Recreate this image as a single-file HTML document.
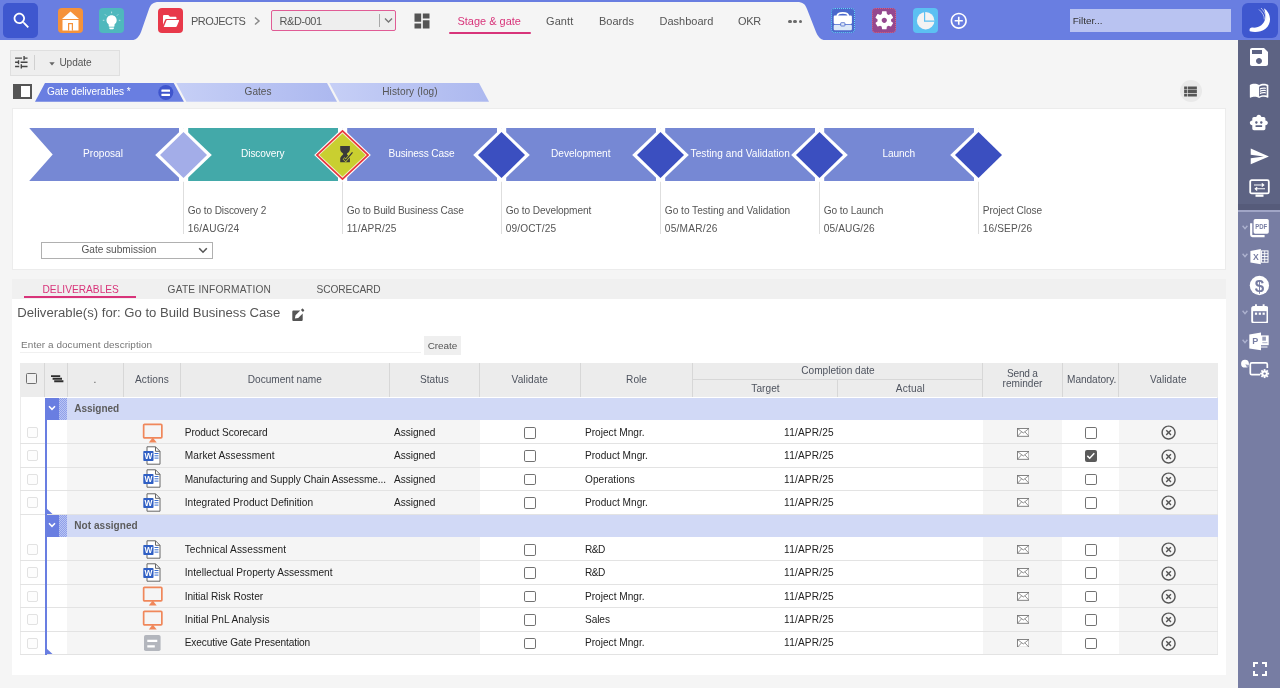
<!DOCTYPE html>
<html lang="en"><head><meta charset="utf-8"><title>Stage &amp; gate - R&amp;D-001</title>
<style>
html,body{margin:0;padding:0}
body{width:1280px;height:688px;overflow:hidden;position:relative;background:#f5f5f5;font-family:"Liberation Sans", sans-serif;}
div,svg,span.t{position:absolute;box-sizing:border-box}
span.t{white-space:nowrap;}
span.t i{display:inline-block;width:0;height:0}
#app{left:0;top:0;width:1280px;height:688px;will-change:transform}
</style></head><body><div id="app">
<div style="left:0px;top:0px;width:1280px;height:40px;background:#697ee1"></div>
<svg style="left:120px;top:0px" width="720" height="41" viewBox="120 0 720 41" ><path d="M124 41 C135 41 138 39 141 32 L149 9 C151 4 153 2 159 2 L797 2 C803 2 805 4 807 9 L816 32 C819 39 822 41 833 41 Z" fill="#f5f5f5"/></svg>
<div style="left:3px;top:3px;width:35px;height:35px;background:#3e57cf;border-radius:5px"></div>
<svg style="left:11px;top:10px" width="21" height="21" viewBox="0 0 24 24" ><path fill="#fff" d="M15.5 14h-.79l-.28-.27C15.41 12.59 16 11.11 16 9.5 16 5.91 13.09 3 9.500 3S3 5.910 3 9.500 5.910 16 9.500 16c1.610 0 3.090-.59 4.230-1.570l.27.28v.79l5 4.990L20.490 19l-4.990-5zm-6 0C7.010 14 5 11.990 5 9.500S7.010 5 9.500 5 14 7.010 14 9.500 11.990 14 9.500 14z"/></svg>
<div style="left:57.5px;top:8px;width:25px;height:25px;background:#f5923a;border-radius:4px"></div>
<svg style="left:57.5px;top:8px" width="25" height="25" viewBox="0 0 25 25" ><path fill="#fff" d="M12.500 3.500 L21 11 H4 Z"/><path fill="#fff" d="M4.500 12 H20.500 V22.500 H4.500 Z"/><path fill="#f5923a" d="M10 15 H15 V22.500 H10 Z"/><path fill="#fff" d="M11.200 16.200 H13.800 V22.500 H11.200 Z"/></svg>
<div style="left:99px;top:8px;width:25px;height:25px;background:#4fb8bd;border-radius:4px"></div>
<svg style="left:99px;top:8px" width="25" height="25" viewBox="0 0 25 25" ><path fill="#fff" d="M12.600 7.300 C9.600 7.300 7.500 9.600 7.500 12.300 C7.500 14.100 8.400 15.500 9.700 16.400 V18 C9.700 18.400 10 18.700 10.400 18.700 H14.800 C15.200 18.700 15.500 18.400 15.500 18 V16.400 C16.800 15.500 17.700 14.100 17.700 12.300 C17.700 9.600 15.600 7.300 12.600 7.300 Z M10.300 19.600 H14.900 V20.300 C14.900 20.800 14.500 21.200 14 21.200 H11.200 C10.700 21.200 10.300 20.800 10.300 20.300 Z"/><path d="M12.600 3.600 V5.300 M6 6.400 L7.200 7.600 M19.200 6.400 L18 7.600 M3.800 12.300 H5.400 M19.800 12.300 H21.400" stroke="#bfe6e8" stroke-width="0.900" fill="none"/></svg>
<div style="left:157.5px;top:8px;width:25px;height:25px;background:#e8394a;border-radius:4px"></div>
<svg style="left:157.5px;top:8px" width="25" height="25" viewBox="0 0 25 25" ><path fill="#fff" d="M5 8.200 C5 7.500 5.500 7 6.200 7 H10.300 L12 8.800 H17.300 C18 8.800 18.500 9.300 18.500 10 V11 H8.500 C7.800 11 7.300 11.300 7 12 L5 16.800 Z"/><path fill="#fff" d="M8.700 12 H20.300 C20.900 12 21.200 12.500 21 13 L18.800 18.200 C18.600 18.700 18.200 19 17.600 19 H5.700 Z"/></svg>
<svg style="left:253px;top:15.5px" width="8" height="10" viewBox="0 0 8 10" ><path d="M2 1.500 L6 5 L2 8.500" fill="none" stroke="#8a8a8a" stroke-width="1.500"/></svg>
<div style="left:271px;top:10px;width:124.5px;height:20.5px;background:#eee;border:1px solid #e05c95;border-radius:2px"></div>
<div style="left:379px;top:14px;width:1px;height:13px;background:#a8a8a8"></div>
<svg style="left:383.5px;top:17px" width="9" height="7" viewBox="0 0 9 7" ><path d="M1 1.500 L4.500 5 L8 1.500" fill="none" stroke="#777" stroke-width="1.400"/></svg>
<svg style="left:412px;top:10.5px" width="20" height="20" viewBox="0 0 24 24" ><path fill="#555" d="M3 13h8V3H3v10zm0 8h8v-6H3v6zm10 0h8V11h-8v10zm0-18v6h8V3h-8z"/></svg>
<div style="left:449px;top:32px;width:81.5px;height:2px;background:#d8347a;border-radius:1px"></div>
<div style="left:788.05px;top:19.5px;width:3.5px;height:3.5px;background:#6a6a6a;border-radius:50%"></div>
<div style="left:793.3px;top:19.5px;width:3.5px;height:3.5px;background:#6a6a6a;border-radius:50%"></div>
<div style="left:798.55px;top:19.5px;width:3.5px;height:3.5px;background:#6a6a6a;border-radius:50%"></div>
<div style="left:830.5px;top:8px;width:24px;height:24.7px;background:#4a68cc;border:1px dotted #63d4f2;border-radius:4px"></div>
<svg style="left:828px;top:6px" width="30" height="30" viewBox="828 6 30 30" ><path d="M837.300 16 C837.300 11.800 848.300 11.800 848.300 16" fill="none" stroke="#fff" stroke-width="1.700"/><rect x="833.700" y="15.500" width="18.200" height="8.400" rx="1.200" fill="#fff"/><rect x="833.700" y="24.700" width="18.200" height="5.500" rx="1.200" fill="#dce8f7"/><rect x="840.700" y="22.700" width="4.200" height="3.300" rx="0.500" fill="#dce8f7" stroke="#4a68cc" stroke-width="0.800"/></svg>
<div style="left:872.2px;top:8px;width:24px;height:24.7px;background:#95488f;border:1px dotted #d86078;border-radius:4px"></div>
<svg style="left:873px;top:9.3px" width="22.6" height="22.6" viewBox="0 0 24 24" ><path fill="#fff" d="M19.140 12.940c.04-.3.06-.61.06-.94 0-.32-.02-.64-.07-.94l2.030-1.580c.18-.14.23-.41.12-.61l-1.920-3.320c-.12-.22-.37-.29-.59-.22l-2.390.96c-.5-.38-1.030-.7-1.620-.94l-.36-2.540c-.04-.24-.24-.41-.48-.41h-3.840c-.24 0-.43.17-.47.41l-.36 2.540c-.59.24-1.130.57-1.620.94l-2.390-.96c-.22-.08-.47 0-.59.22L2.740 8.870c-.12.21-.08.47.12.61l2.030 1.580c-.05.3-.09.63-.09.94s.02.64.07.94l-2.030 1.580c-.18.14-.23.41-.12.61l1.920 3.320c.12.22.37.29.59.22l2.390-.96c.5.38 1.030.7 1.620.94l.36 2.540c.05.24.24.41.48.41h3.840c.24 0 .44-.17.47-.41l.36-2.540c.59-.24 1.130-.56 1.620-.94l2.390.96c.22.08.47 0 .59-.22l1.920-3.320c.12-.22.07-.47-.12-.61l-2.010-1.580zM12 14.800c-1.540 0-2.800-1.260-2.800-2.800s1.260-2.800 2.800-2.800 2.800 1.260 2.800 2.800-1.260 2.800-2.800 2.800z"/></svg>
<div style="left:913px;top:8px;width:25px;height:24.8px;background:#5cc0f2;border-radius:4px"></div>
<svg style="left:913px;top:8px" width="25" height="25" viewBox="0 0 25 25" ><circle cx="12.650" cy="12.650" r="8.750" fill="#f3f3f3"/><path d="M11.600 3.500 V13.100 H21.800" fill="none" stroke="#5cc0f2" stroke-width="1.200"/></svg>
<svg style="left:949.35px;top:11px" width="19.5" height="19.5" viewBox="0 0 24 24" ><path fill="#fff" d="M13 7h-2v4H7v2h4v4h2v-4h4v-2h-4V7zm-1-5C6.480 2 2 6.480 2 12s4.480 10 10 10 10-4.480 10-10S17.520 2 12 2zm0 18c-4.410 0-8-3.590-8-8s3.590-8 8-8 8 3.590 8 8-3.590 8-8 8z"/></svg>
<div style="left:1070px;top:9px;width:160.7px;height:22.5px;background:#b9c3f1"></div>
<div style="left:1241.5px;top:3px;width:36px;height:35px;background:#3e57cf;border-radius:6px"></div>
<svg style="left:1241.5px;top:3px" width="36" height="35" viewBox="0 0 36 35" ><path fill="#fff" d="M21.800 5.200 C29 9.500 30.500 20 23.500 25.800 C19 29.300 12.500 29.800 7.800 28.300 C7 25.800 8.300 24.300 10.500 24.600 C16.500 25.300 22.300 21.500 23.200 15.500 C23.700 11.800 23.300 8.200 21.800 5.200 Z"/><path d="M19 5 C23 9 24.500 13 24 17 M17 6.500 C20.500 9.500 22.500 13 22.300 16.500" stroke="#dfe4fa" stroke-width="0.700" fill="none"/></svg>
<div style="left:1238px;top:40px;width:42px;height:648px;background:#777da3"></div>
<div style="left:1238px;top:40px;width:42px;height:164px;background:#5d6383"></div>
<div style="left:1238px;top:204px;width:42px;height:7px;background:#565b7a"></div>
<div style="left:1238px;top:210.4px;width:42px;height:1.2px;background:#a0a5c6"></div>
<svg style="left:1247px;top:44.7px" width="24" height="24" viewBox="0 0 24 24" ><path fill="#fff" d="M17 3H5c-1.110 0-2 .9-2 2v14c0 1.100.89 2 2 2h14c1.100 0 2-.9 2-2V7l-4-4zm-5 16c-1.660 0-3-1.340-3-3s1.340-3 3-3 3 1.340 3 3-1.340 3-3 3zm3-10H5V5h10v4z"/></svg>
<svg style="left:1249.2px;top:80px" width="20.2" height="20.2" viewBox="0 0 24 24" ><path fill="#fff" d="M21 5c-1.110-.35-2.330-.5-3.500-.5-1.950 0-4.050.4-5.500 1.500-1.450-1.100-3.550-1.500-5.500-1.500S2.450 4.900 1 6v14.650c0 .25.25.5.5.5.1 0 .15-.05.25-.05C3.100 20.450 5.050 20 6.500 20c1.950 0 4.050.4 5.500 1.500 1.350-.85 3.800-1.500 5.500-1.500 1.650 0 3.350.3 4.750 1.050.1.050.15.050.25.050.25 0 .5-.25.5-.5V6c-.6-.45-1.250-.75-2-1zm0 13.500c-1.100-.35-2.300-.5-3.500-.5-1.700 0-4.150.65-5.500 1.500V8c1.350-.85 3.800-1.500 5.500-1.500 1.200 0 2.400.15 3.500.5v11.500z"/><path fill="#fff" d="M17.500 10.500c.88 0 1.730.09 2.500.26V9.240c-.79-.15-1.640-.24-2.500-.24-1.700 0-3.240.29-4.500.83v1.660c1.130-.64 2.700-.99 4.500-.99zM13 12.490v1.660c1.130-.64 2.700-.99 4.500-.99.88 0 1.730.09 2.500.26V11.900c-.79-.15-1.640-.24-2.500-.24-1.700 0-3.240.3-4.500.83zM17.500 14.330c-1.700 0-3.240.29-4.500.83v1.660c1.130-.64 2.700-.99 4.500-.99.88 0 1.730.09 2.500.26v-1.520c-.79-.16-1.640-.24-2.500-.24z"/></svg>
<svg style="left:1249.3px;top:113.4px" width="19.7" height="19.7" viewBox="0 0 24 24" ><path fill="#fff" d="M20 9V7c0-1.100-.9-2-2-2h-3c0-1.660-1.340-3-3-3S9 3.340 9 5H6c-1.100 0-2 .9-2 2v2c-1.660 0-3 1.340-3 3s1.340 3 3 3v4c0 1.100.9 2 2 2h12c1.100 0 2-.9 2-2v-4c1.660 0 3-1.340 3-3s-1.340-3-3-3zM7.500 11.500c0-.83.67-1.500 1.500-1.500s1.500.67 1.500 1.500S9.830 13 9 13s-1.500-.67-1.500-1.500zM16 17H8v-2h8v2zm-1-4c-.83 0-1.500-.67-1.500-1.500S14.170 10 15 10s1.500.67 1.500 1.500S15.830 13 15 13z"/></svg>
<svg style="left:1248.6px;top:146.3px" width="20.8" height="20.8" viewBox="0 0 24 24" ><path fill="#fff" d="M2.010 21L23 12 2.010 3 2 10l15 2-15 2z"/></svg>
<svg style="left:1248.8px;top:179px" width="21" height="19" viewBox="0 0 21 19" ><rect x="1.200" y="1.200" width="18.600" height="13.200" rx="1.500" fill="none" stroke="#fff" stroke-width="1.800"/><path fill="#fff" d="M6.500 15.500 H14.500 V17.800 H6.500 Z"/><path d="M5 6 H14.500 M12.800 4.300 L14.800 6 L12.800 7.700 M16 9.800 H6.500 M8.200 8.100 L6.200 9.800 L8.200 11.500" fill="none" stroke="#fff" stroke-width="1.100"/></svg>
<svg style="left:1242px;top:224.5px" width="6" height="5" viewBox="0 0 6 5" ><path d="M0.600 0.800 L3 3.600 L5.400 0.800" fill="none" stroke="#adb2cf" stroke-width="1.400"/></svg>
<svg style="left:1248px;top:217px" width="24" height="22" viewBox="1248 217 24 22" ><path d="M1251.200 223.300 V234.800 C1251.200 235.600 1251.700 236.100 1252.500 236.100 H1264.600" fill="none" stroke="#fff" stroke-width="2.200"/><rect x="1253.600" y="219" width="15.200" height="14.700" rx="1.700" fill="#fff"/><text x="1261.250" y="229.400" text-anchor="middle" font-family="Liberation Sans, sans-serif" font-size="7.200" font-weight="700" textLength="12" lengthAdjust="spacingAndGlyphs" fill="#777da3">PDF</text></svg>
<svg style="left:1242px;top:253px" width="6" height="5" viewBox="0 0 6 5" ><path d="M0.600 0.800 L3 3.600 L5.400 0.800" fill="none" stroke="#adb2cf" stroke-width="1.400"/></svg>
<svg style="left:1249px;top:248px" width="21" height="18" viewBox="1249 248 21 18" ><path fill="#fff" d="M1250.400 251 L1260.800 249.100 V264.200 L1250.400 262.500 Z"/><text x="1255.750" y="260.100" text-anchor="middle" font-family="Liberation Sans, sans-serif" font-size="8.600" font-weight="700" fill="#777da3">X</text><rect x="1261.400" y="250.900" width="6.600" height="11.300" fill="none" stroke="#fff" stroke-width="1"/><path d="M1261.400 253.700 H1268 M1261.400 256.500 H1268 M1261.400 259.300 H1268 M1264.700 250.900 V262.200" stroke="#fff" stroke-width="0.900" fill="none"/></svg>
<svg style="left:1248px;top:274px" width="23" height="23" viewBox="1248 274 23 23" ><circle cx="1259.400" cy="285.500" r="9.650" fill="#fff"/><text x="1259.450" y="291.500" text-anchor="middle" font-family="Liberation Sans, sans-serif" font-size="17" font-weight="700" fill="#777da3">$</text></svg>
<svg style="left:1242px;top:310px" width="6" height="5" viewBox="0 0 6 5" ><path d="M0.600 0.800 L3 3.600 L5.400 0.800" fill="none" stroke="#adb2cf" stroke-width="1.400"/></svg>
<svg style="left:1250.5px;top:303.6px" width="17.6" height="19.6" viewBox="0 0 18 20.500" ><rect x="1" y="3" width="16" height="16.500" rx="1.800" fill="none" stroke="#fff" stroke-width="2"/><rect x="1" y="3" width="16" height="4.500" fill="#fff"/><rect x="4" y="0.300" width="2" height="4" fill="#fff"/><rect x="12" y="0.300" width="2" height="4" fill="#fff"/><rect x="3.900" y="9" width="2.300" height="2.300" fill="#fff"/><rect x="7.900" y="9" width="2.300" height="2.300" fill="#fff"/><rect x="11.900" y="9" width="2.300" height="2.300" fill="#fff"/></svg>
<svg style="left:1242px;top:338.5px" width="6" height="5" viewBox="0 0 6 5" ><path d="M0.600 0.800 L3 3.600 L5.400 0.800" fill="none" stroke="#adb2cf" stroke-width="1.400"/></svg>
<svg style="left:1248px;top:331px" width="23" height="21" viewBox="1248 331 23 21" ><path fill="#fff" d="M1249.300 334.400 L1261 332.400 V350.300 L1249.300 348.400 Z"/><text x="1255.200" y="344.100" text-anchor="middle" font-family="Liberation Sans, sans-serif" font-size="9" font-weight="700" fill="#777da3">P</text><rect x="1261" y="335.400" width="7.700" height="9.800" fill="#fff"/><rect x="1262.300" y="336.700" width="3.600" height="4" fill="#777da3" opacity="0.750"/><path d="M1262.300 342.700 H1267.400" stroke="#777da3" stroke-width="0.800" opacity="0.750"/><path d="M1261 347 H1267.500" stroke="#fff" stroke-width="1"/></svg>
<svg style="left:1240px;top:357px" width="31" height="24" viewBox="1240 357 31 24" ><circle cx="1245" cy="363.700" r="3.900" fill="#fff"/><path d="M1245.300 364.200 L1249.500 365.200 L1247.500 368.200 Z" fill="#9a9fbe"/><path d="M1260 374.700 H1251.800 C1250.900 374.700 1250.300 374.100 1250.300 373.200 V364.300 C1250.300 363.400 1250.900 362.800 1251.800 362.800 H1265.800 C1266.700 362.800 1267.300 363.400 1267.300 364.300 V368" fill="none" stroke="#fff" stroke-width="1.700"/><rect x="1263.700" y="369.100" width="1.800" height="9" fill="#fff" transform="rotate(0 1264.600 373.600)"/><rect x="1263.700" y="369.100" width="1.800" height="9" fill="#fff" transform="rotate(45 1264.600 373.600)"/><rect x="1263.700" y="369.100" width="1.800" height="9" fill="#fff" transform="rotate(90 1264.600 373.600)"/><rect x="1263.700" y="369.100" width="1.800" height="9" fill="#fff" transform="rotate(135 1264.600 373.600)"/><circle cx="1264.600" cy="373.600" r="3.100" fill="#fff"/><circle cx="1264.600" cy="373.600" r="1.200" fill="#777da3"/></svg>
<svg style="left:1248px;top:656.5px" width="24" height="24" viewBox="0 0 24 24" ><path fill="#fff" d="M7 14H5v5h5v-2H7v-3zm-2-4h2V7h3V5H5v5zm12 7h-3v2h5v-5h-2v3zM14 5v2h3v3h2V5h-5z"/></svg>
<div style="left:10px;top:50px;width:109.5px;height:25.5px;background:#eeeeee;border:1px solid #dfdfdf"></div>
<svg style="left:12.7px;top:54px" width="16.6" height="16.6" viewBox="0 0 24 24" ><path fill="#444" d="M3 17v2h6v-2H3zM3 5v2h10V5H3zm10 16v-2h8v-2h-8v-2h-2v6h2zM7 9v2H3v2h4v2h2V9H7zm14 4v-2H11v2h10zm-6-4h2V7h4V5h-4V3h-2v6z"/></svg>
<div style="left:34px;top:55px;width:1px;height:15px;background:#d0d0d0"></div>
<svg style="left:49px;top:62px" width="6" height="4" viewBox="0 0 6 4" ><path d="M0.300 0.300 H5.700 L3 3.500 Z" fill="#666"/></svg>
<div style="left:1179.5px;top:80px;width:22px;height:22px;background:#e9e9e9;border-radius:50%"></div>
<svg style="left:1182px;top:82.5px" width="17" height="17" viewBox="0 0 24 24" ><path fill="#555" d="M3 14h4v-4H3v4zm0 5h4v-4H3v4zM3 9h4V5H3v4zm5 5h13v-4H8v4zm0 5h13v-4H8v4zM8 5v4h13V5H8z"/></svg>
<div style="left:13px;top:84.2px;width:19px;height:14.4px;border:2px solid #555;background:#fff"></div>
<div style="left:13px;top:84.2px;width:7.5px;height:14.4px;background:#555"></div>
<svg style="left:30px;top:82px" width="465" height="21" viewBox="30 82 465 21" ><defs><linearGradient id="lg" x1="0" x2="1"><stop offset="0" stop-color="#c6cff6"/><stop offset="1" stop-color="#acb8ef"/></linearGradient></defs><path d="M45 83 H173.700 L183.900 101.800 H35 Z" fill="#697ee1"/><path d="M176.300 83 H327 L337 101.800 H186.400 Z" fill="url(#lg)"/><path d="M329.400 83 H479 L489 101.800 H339.500 Z" fill="url(#lg)"/><circle cx="165.800" cy="92.500" r="7.500" fill="#3f55cd"/><rect x="161.400" y="89.500" width="8.600" height="2.300" rx="0.400" fill="#fff"/><rect x="161.400" y="93.700" width="8.600" height="2.300" rx="0.400" fill="#fff"/></svg>
<div style="left:12px;top:107.5px;width:1214px;height:162px;background:#fff;border:1px solid #ececec"></div>
<svg style="left:20px;top:120px" width="1000" height="120" viewBox="20 120 1000 120" ><rect x="183.0" y="128" width="1" height="106" fill="#dedede"/><rect x="342.0" y="128" width="1" height="106" fill="#dedede"/><rect x="501.0" y="128" width="1" height="106" fill="#dedede"/><rect x="660.0" y="128" width="1" height="106" fill="#dedede"/><rect x="819.0" y="128" width="1" height="106" fill="#dedede"/><rect x="978.0" y="128" width="1" height="106" fill="#dedede"/><path d="M29.2 128 H179 V181 H29.2 L52.7 154.500 Z" fill="#7688d4"/><rect x="188.2" y="128" width="149.8" height="53" fill="#43a9a9"/><rect x="347.2" y="128" width="149.8" height="53" fill="#7688d4"/><rect x="506.2" y="128" width="149.8" height="53" fill="#7688d4"/><rect x="665.2" y="128" width="149.79999999999995" height="53" fill="#7688d4"/><rect x="824.2" y="128" width="149.79999999999995" height="53" fill="#7688d4"/><path d="M155.2 155 L183.5 128 L211.8 155 L183.5 182 Z" fill="#fff"/><path d="M160.0 155 L183.5 132 L207.0 155 L183.5 178 Z" fill="#a3ade8"/><path d="M314.2 155 L342.5 128 L370.8 155 L342.5 182 Z" fill="#fff"/><path d="M315.7 155 L342.5 129.7 L369.3 155 L342.5 180.3 Z" fill="#e8343c"/><path d="M318.2 155 L342.5 132.1 L366.8 155 L342.5 177.9 Z" fill="#f4efc8"/><path d="M319.5 155 L342.5 133.4 L365.5 155 L342.5 176.6 Z" fill="#c9cf30"/><path fill="#3a3a3a" d="M340.2 146 H349.9 V149.500 C349.9 151.800 347.5 152.800 346.8 154 C347.5 155.300 349.9 156.500 349.9 158.500 V162.200 H340.2 V158.500 C340.2 156.500 342.7 155.300 343.3 154 C342.7 152.800 340.2 151.800 340.2 149.500 Z"/><path d="M343.5 158.300 L345.7 160.300 L352.5 152.300" fill="none" stroke="#c9cf30" stroke-width="2.600"/><path d="M343.7 158.500 L345.7 160.300 L352.5 152.300" fill="none" stroke="#3a3a3a" stroke-width="1.300"/><path d="M473.2 155 L501.5 128 L529.8 155 L501.5 182 Z" fill="#fff"/><path d="M478.0 155 L501.5 132 L525.0 155 L501.5 178 Z" fill="#3b4fc0"/><path d="M632.2 155 L660.5 128 L688.8 155 L660.5 182 Z" fill="#fff"/><path d="M637.0 155 L660.5 132 L684.0 155 L660.5 178 Z" fill="#3b4fc0"/><path d="M791.2 155 L819.5 128 L847.8 155 L819.5 182 Z" fill="#fff"/><path d="M796.0 155 L819.5 132 L843.0 155 L819.5 178 Z" fill="#3b4fc0"/><path d="M950.2 155 L978.5 128 L1006.8 155 L978.5 182 Z" fill="#fff"/><path d="M955.0 155 L978.5 132 L1002.0 155 L978.5 178 Z" fill="#3b4fc0"/></svg>
<div style="left:41px;top:242px;width:171.5px;height:16.5px;background:#fff;border:1px solid #b0b0b0"></div>
<svg style="left:197.5px;top:246.5px" width="10" height="7" viewBox="0 0 10 7" ><path d="M1.200 1.300 L5 5.200 L8.800 1.300" fill="none" stroke="#555" stroke-width="1.600"/></svg>
<div style="left:12px;top:279.2px;width:1214px;height:19.4px;background:#f0f0f0"></div>
<div style="left:12px;top:298.5px;width:1214px;height:376.5px;background:#fff"></div>
<div style="left:24px;top:296.3px;width:112px;height:2px;background:#d8347a"></div>
<svg style="left:291px;top:307px" width="15" height="15" viewBox="291 307 15 15" ><path fill="#555" d="M293.600 310.500 H300.300 L295.500 315.300 L294.900 318.600 L298.200 318 L302.700 313.500 V319.700 C302.700 320.500 302.200 321 301.400 321 H293.600 C292.800 321 292.300 320.500 292.300 319.700 V311.800 C292.300 311 292.800 310.500 293.600 310.500 Z"/><path fill="#555" d="M300.900 309.900 L302.100 308.700 C302.300 308.500 302.700 308.500 302.900 308.700 L304.100 309.900 C304.300 310.100 304.300 310.500 304.100 310.700 L302.900 311.900 Z"/></svg>
<div style="left:19.5px;top:351.8px;width:401px;height:1px;background:#f0f0f0"></div>
<div style="left:424px;top:336.3px;width:37.4px;height:19.2px;background:#efefef"></div>
<div style="left:19.5px;top:362.5px;width:1198.0px;height:34.39999999999998px;background:#ececec"></div>
<div style="left:43.5px;top:362.5px;width:1px;height:34.39999999999998px;background:#d7d7d7"></div>
<div style="left:66.5px;top:362.5px;width:1px;height:34.39999999999998px;background:#d7d7d7"></div>
<div style="left:122.8px;top:362.5px;width:1px;height:34.39999999999998px;background:#d7d7d7"></div>
<div style="left:180.0px;top:362.5px;width:1px;height:34.39999999999998px;background:#d7d7d7"></div>
<div style="left:389.0px;top:362.5px;width:1px;height:34.39999999999998px;background:#d7d7d7"></div>
<div style="left:479.0px;top:362.5px;width:1px;height:34.39999999999998px;background:#d7d7d7"></div>
<div style="left:580.0px;top:362.5px;width:1px;height:34.39999999999998px;background:#d7d7d7"></div>
<div style="left:692.0px;top:362.5px;width:1px;height:34.39999999999998px;background:#d7d7d7"></div>
<div style="left:982.0px;top:362.5px;width:1px;height:34.39999999999998px;background:#d7d7d7"></div>
<div style="left:1061.5px;top:362.5px;width:1px;height:34.39999999999998px;background:#d7d7d7"></div>
<div style="left:1118.2px;top:362.5px;width:1px;height:34.39999999999998px;background:#d7d7d7"></div>
<div style="left:692.5px;top:379px;width:290px;height:1px;background:#d7d7d7"></div>
<div style="left:837px;top:379.5px;width:1px;height:17.4px;background:#d7d7d7"></div>
<div style="left:26.3px;top:373px;width:11px;height:11px;border:1.500px solid #707070;border-radius:1.500px;background:#f0f0f0"></div>
<svg style="left:50.7px;top:375.3px" width="13" height="8" viewBox="0 0 13 8" ><path d="M0 1.100 H9.200 M1.600 3.700 H11 M3.200 6.300 H12.400" stroke="#2e2e2e" stroke-width="1.900"/></svg>
<div style="left:19.5px;top:396.5px;width:1px;height:257.51px;background:#ebebeb"></div>
<div style="left:1217px;top:396.5px;width:1px;height:257.51px;background:#ebebeb"></div>
<div style="left:45px;top:397.8px;width:1172.5px;height:22.11px;background:#d1d9f6"></div>
<div style="left:45px;top:397.8px;width:14px;height:22.11px;background:#697ee1"></div>
<div style="left:59px;top:397.8px;width:7.8px;height:22.11px;background:repeating-conic-gradient(#8fa0ea 0% 25%, #b9c4f3 0% 50%) 0 0/2px 2px"></div>
<svg style="left:48px;top:405.0px" width="8" height="6" viewBox="0 0 8 6" ><path d="M1 1.200 L4 4.300 L7 1.200" fill="none" stroke="#fff" stroke-width="1.500"/></svg>
<div style="left:67px;top:419.91px;width:413px;height:23.41px;background:#f5f5f5"></div>
<div style="left:982.5px;top:419.91px;width:79.5px;height:23.41px;background:#f5f5f5"></div>
<div style="left:1118.7px;top:419.91px;width:98.8px;height:23.41px;background:#f5f5f5"></div>
<div style="left:45px;top:419.91px;width:2.3px;height:23.41px;background:#697ee1"></div>
<div style="left:26.9px;top:426.81px;width:11px;height:11px;border:1.300px solid #e2e2e2;border-radius:2px;background:#fdfdfd"></div>
<svg style="left:141.6px;top:422.51000000000005px" width="22" height="20" viewBox="0 0 22 20" ><rect x="1.650" y="1.350" width="18.200" height="13.600" rx="0.900" fill="none" stroke="#f0875a" stroke-width="1.700"/><path d="M10.750 14.600 L14.700 19.500 H6.800 Z" fill="#f0875a"/></svg>
<div style="left:524.3px;top:427.01000000000005px;width:11.5px;height:11.5px;border:1.700px solid #727272;border-radius:1.800px;background:#fff"></div>
<svg style="left:1016.5px;top:428.01000000000005px" width="12.5" height="8.8" viewBox="0 0 12.500 8.800" ><rect x="0.500" y="0.500" width="11.500" height="7.800" fill="#fff" stroke="#777" stroke-width="0.900"/><path d="M0.500 0.500 L6.250 5 L12 0.500 M0.500 8.300 L4.600 3.800 M12 8.300 L7.900 3.800" fill="none" stroke="#777" stroke-width="0.800"/></svg>
<div style="left:1085px;top:427.01000000000005px;width:11.5px;height:11.5px;border:1.700px solid #727272;border-radius:1.800px;background:#fff"></div>
<svg style="left:1159.8px;top:424.21000000000004px" width="17.2" height="17.2" viewBox="0 0 24 24" ><path fill="#555" d="M14.590 8L12 10.590 9.410 8 8 9.410 10.590 12 8 14.590 9.410 16 12 13.410 14.590 16 16 14.590 13.410 12 16 9.410 14.590 8zM12 2C6.470 2 2 6.470 2 12s4.470 10 10 10 10-4.470 10-10S17.530 2 12 2zm0 18c-4.410 0-8-3.590-8-8s3.590-8 8-8 8 3.590 8 8-3.590 8-8 8z"/></svg>
<div style="left:67px;top:443.32px;width:413px;height:23.41px;background:#f5f5f5"></div>
<div style="left:982.5px;top:443.32px;width:79.5px;height:23.41px;background:#f5f5f5"></div>
<div style="left:1118.7px;top:443.32px;width:98.8px;height:23.41px;background:#f5f5f5"></div>
<div style="left:45px;top:443.32px;width:2.3px;height:23.41px;background:#697ee1"></div>
<div style="left:26.9px;top:450.21999999999997px;width:11px;height:11px;border:1.300px solid #e2e2e2;border-radius:2px;background:#fdfdfd"></div>
<svg style="left:142.5px;top:446.02px" width="18" height="19" viewBox="0 0 18 19" ><path d="M4 0.800 H12.500 L17 5.300 V18.200 H4 Z" fill="#fff" stroke="#666" stroke-width="1"/><path d="M12.500 0.800 V5.300 H17" fill="none" stroke="#666" stroke-width="1"/><path d="M11.500 7.500 H15.500 M11.500 9.800 H15.500 M11.500 12.100 H15.500" stroke="#3b6fd0" stroke-width="1"/><rect x="0.300" y="5" width="10.200" height="10" rx="0.800" fill="#2f5fc4"/><text x="5.400" y="13" text-anchor="middle" font-family="Liberation Sans, sans-serif" font-size="8.400" font-weight="700" fill="#fff">W</text></svg>
<div style="left:524.3px;top:450.42px;width:11.5px;height:11.5px;border:1.700px solid #727272;border-radius:1.800px;background:#fff"></div>
<svg style="left:1016.5px;top:451.42px" width="12.5" height="8.8" viewBox="0 0 12.500 8.800" ><rect x="0.500" y="0.500" width="11.500" height="7.800" fill="#fff" stroke="#777" stroke-width="0.900"/><path d="M0.500 0.500 L6.250 5 L12 0.500 M0.500 8.300 L4.600 3.800 M12 8.300 L7.900 3.800" fill="none" stroke="#777" stroke-width="0.800"/></svg>
<div style="left:1085px;top:450.42px;width:11.5px;height:11.5px;background:#5a5a5a;border-radius:2px"></div>
<svg style="left:1085px;top:450.42px" width="11.5" height="11.5" viewBox="0 0 11.500 11.500" ><path d="M2.300 5.900 L4.700 8.200 L9.300 3.300" fill="none" stroke="#fff" stroke-width="1.500"/></svg>
<svg style="left:1159.8px;top:447.62px" width="17.2" height="17.2" viewBox="0 0 24 24" ><path fill="#555" d="M14.590 8L12 10.590 9.410 8 8 9.410 10.590 12 8 14.590 9.410 16 12 13.410 14.590 16 16 14.590 13.410 12 16 9.410 14.590 8zM12 2C6.470 2 2 6.470 2 12s4.470 10 10 10 10-4.470 10-10S17.530 2 12 2zm0 18c-4.410 0-8-3.590-8-8s3.590-8 8-8 8 3.590 8 8-3.590 8-8 8z"/></svg>
<div style="left:67px;top:466.73px;width:413px;height:23.41px;background:#f5f5f5"></div>
<div style="left:982.5px;top:466.73px;width:79.5px;height:23.41px;background:#f5f5f5"></div>
<div style="left:1118.7px;top:466.73px;width:98.8px;height:23.41px;background:#f5f5f5"></div>
<div style="left:45px;top:466.73px;width:2.3px;height:23.41px;background:#697ee1"></div>
<div style="left:26.9px;top:473.63px;width:11px;height:11px;border:1.300px solid #e2e2e2;border-radius:2px;background:#fdfdfd"></div>
<svg style="left:142.5px;top:469.43px" width="18" height="19" viewBox="0 0 18 19" ><path d="M4 0.800 H12.500 L17 5.300 V18.200 H4 Z" fill="#fff" stroke="#666" stroke-width="1"/><path d="M12.500 0.800 V5.300 H17" fill="none" stroke="#666" stroke-width="1"/><path d="M11.500 7.500 H15.500 M11.500 9.800 H15.500 M11.500 12.100 H15.500" stroke="#3b6fd0" stroke-width="1"/><rect x="0.300" y="5" width="10.200" height="10" rx="0.800" fill="#2f5fc4"/><text x="5.400" y="13" text-anchor="middle" font-family="Liberation Sans, sans-serif" font-size="8.400" font-weight="700" fill="#fff">W</text></svg>
<div style="left:524.3px;top:473.83000000000004px;width:11.5px;height:11.5px;border:1.700px solid #727272;border-radius:1.800px;background:#fff"></div>
<svg style="left:1016.5px;top:474.83000000000004px" width="12.5" height="8.8" viewBox="0 0 12.500 8.800" ><rect x="0.500" y="0.500" width="11.500" height="7.800" fill="#fff" stroke="#777" stroke-width="0.900"/><path d="M0.500 0.500 L6.250 5 L12 0.500 M0.500 8.300 L4.600 3.800 M12 8.300 L7.900 3.800" fill="none" stroke="#777" stroke-width="0.800"/></svg>
<div style="left:1085px;top:473.83000000000004px;width:11.5px;height:11.5px;border:1.700px solid #727272;border-radius:1.800px;background:#fff"></div>
<svg style="left:1159.8px;top:471.03000000000003px" width="17.2" height="17.2" viewBox="0 0 24 24" ><path fill="#555" d="M14.590 8L12 10.590 9.410 8 8 9.410 10.590 12 8 14.590 9.410 16 12 13.410 14.590 16 16 14.590 13.410 12 16 9.410 14.590 8zM12 2C6.470 2 2 6.470 2 12s4.470 10 10 10 10-4.470 10-10S17.530 2 12 2zm0 18c-4.410 0-8-3.590-8-8s3.590-8 8-8 8 3.590 8 8-3.590 8-8 8z"/></svg>
<div style="left:67px;top:490.14px;width:413px;height:23.41px;background:#f5f5f5"></div>
<div style="left:982.5px;top:490.14px;width:79.5px;height:23.41px;background:#f5f5f5"></div>
<div style="left:1118.7px;top:490.14px;width:98.8px;height:23.41px;background:#f5f5f5"></div>
<div style="left:45px;top:490.14px;width:2.3px;height:23.41px;background:#697ee1"></div>
<div style="left:26.9px;top:497.03999999999996px;width:11px;height:11px;border:1.300px solid #e2e2e2;border-radius:2px;background:#fdfdfd"></div>
<svg style="left:142.5px;top:492.84px" width="18" height="19" viewBox="0 0 18 19" ><path d="M4 0.800 H12.500 L17 5.300 V18.200 H4 Z" fill="#fff" stroke="#666" stroke-width="1"/><path d="M12.500 0.800 V5.300 H17" fill="none" stroke="#666" stroke-width="1"/><path d="M11.500 7.500 H15.500 M11.500 9.800 H15.500 M11.500 12.100 H15.500" stroke="#3b6fd0" stroke-width="1"/><rect x="0.300" y="5" width="10.200" height="10" rx="0.800" fill="#2f5fc4"/><text x="5.400" y="13" text-anchor="middle" font-family="Liberation Sans, sans-serif" font-size="8.400" font-weight="700" fill="#fff">W</text></svg>
<div style="left:524.3px;top:497.24px;width:11.5px;height:11.5px;border:1.700px solid #727272;border-radius:1.800px;background:#fff"></div>
<svg style="left:1016.5px;top:498.24px" width="12.5" height="8.8" viewBox="0 0 12.500 8.800" ><rect x="0.500" y="0.500" width="11.500" height="7.800" fill="#fff" stroke="#777" stroke-width="0.900"/><path d="M0.500 0.500 L6.250 5 L12 0.500 M0.500 8.300 L4.600 3.800 M12 8.300 L7.900 3.800" fill="none" stroke="#777" stroke-width="0.800"/></svg>
<div style="left:1085px;top:497.24px;width:11.5px;height:11.5px;border:1.700px solid #727272;border-radius:1.800px;background:#fff"></div>
<svg style="left:1159.8px;top:494.44px" width="17.2" height="17.2" viewBox="0 0 24 24" ><path fill="#555" d="M14.590 8L12 10.590 9.410 8 8 9.410 10.590 12 8 14.590 9.410 16 12 13.410 14.590 16 16 14.590 13.410 12 16 9.410 14.590 8zM12 2C6.470 2 2 6.470 2 12s4.470 10 10 10 10-4.470 10-10S17.530 2 12 2zm0 18c-4.410 0-8-3.590-8-8s3.590-8 8-8 8 3.590 8 8-3.590 8-8 8z"/></svg>
<div style="left:45px;top:514.8499999999999px;width:1172.5px;height:22.11px;background:#d1d9f6"></div>
<div style="left:45px;top:514.8499999999999px;width:14px;height:22.11px;background:#697ee1"></div>
<div style="left:59px;top:514.8499999999999px;width:7.8px;height:22.11px;background:repeating-conic-gradient(#8fa0ea 0% 25%, #b9c4f3 0% 50%) 0 0/2px 2px"></div>
<svg style="left:48px;top:522.05px" width="8" height="6" viewBox="0 0 8 6" ><path d="M1 1.200 L4 4.300 L7 1.200" fill="none" stroke="#fff" stroke-width="1.500"/></svg>
<div style="left:67px;top:536.96px;width:413px;height:23.41px;background:#f5f5f5"></div>
<div style="left:982.5px;top:536.96px;width:79.5px;height:23.41px;background:#f5f5f5"></div>
<div style="left:1118.7px;top:536.96px;width:98.8px;height:23.41px;background:#f5f5f5"></div>
<div style="left:45px;top:536.96px;width:2.3px;height:23.41px;background:#697ee1"></div>
<div style="left:26.9px;top:543.86px;width:11px;height:11px;border:1.300px solid #e2e2e2;border-radius:2px;background:#fdfdfd"></div>
<svg style="left:142.5px;top:539.6600000000001px" width="18" height="19" viewBox="0 0 18 19" ><path d="M4 0.800 H12.500 L17 5.300 V18.200 H4 Z" fill="#fff" stroke="#666" stroke-width="1"/><path d="M12.500 0.800 V5.300 H17" fill="none" stroke="#666" stroke-width="1"/><path d="M11.500 7.500 H15.500 M11.500 9.800 H15.500 M11.500 12.100 H15.500" stroke="#3b6fd0" stroke-width="1"/><rect x="0.300" y="5" width="10.200" height="10" rx="0.800" fill="#2f5fc4"/><text x="5.400" y="13" text-anchor="middle" font-family="Liberation Sans, sans-serif" font-size="8.400" font-weight="700" fill="#fff">W</text></svg>
<div style="left:524.3px;top:544.0600000000001px;width:11.5px;height:11.5px;border:1.700px solid #727272;border-radius:1.800px;background:#fff"></div>
<svg style="left:1016.5px;top:545.0600000000001px" width="12.5" height="8.8" viewBox="0 0 12.500 8.800" ><rect x="0.500" y="0.500" width="11.500" height="7.800" fill="#fff" stroke="#777" stroke-width="0.900"/><path d="M0.500 0.500 L6.250 5 L12 0.500 M0.500 8.300 L4.600 3.800 M12 8.300 L7.900 3.800" fill="none" stroke="#777" stroke-width="0.800"/></svg>
<div style="left:1085px;top:544.0600000000001px;width:11.5px;height:11.5px;border:1.700px solid #727272;border-radius:1.800px;background:#fff"></div>
<svg style="left:1159.8px;top:541.26px" width="17.2" height="17.2" viewBox="0 0 24 24" ><path fill="#555" d="M14.590 8L12 10.590 9.410 8 8 9.410 10.590 12 8 14.590 9.410 16 12 13.410 14.590 16 16 14.590 13.410 12 16 9.410 14.590 8zM12 2C6.470 2 2 6.470 2 12s4.470 10 10 10 10-4.470 10-10S17.530 2 12 2zm0 18c-4.410 0-8-3.590-8-8s3.590-8 8-8 8 3.590 8 8-3.590 8-8 8z"/></svg>
<div style="left:67px;top:560.37px;width:413px;height:23.41px;background:#f5f5f5"></div>
<div style="left:982.5px;top:560.37px;width:79.5px;height:23.41px;background:#f5f5f5"></div>
<div style="left:1118.7px;top:560.37px;width:98.8px;height:23.41px;background:#f5f5f5"></div>
<div style="left:45px;top:560.37px;width:2.3px;height:23.41px;background:#697ee1"></div>
<div style="left:26.9px;top:567.27px;width:11px;height:11px;border:1.300px solid #e2e2e2;border-radius:2px;background:#fdfdfd"></div>
<svg style="left:142.5px;top:563.07px" width="18" height="19" viewBox="0 0 18 19" ><path d="M4 0.800 H12.500 L17 5.300 V18.200 H4 Z" fill="#fff" stroke="#666" stroke-width="1"/><path d="M12.500 0.800 V5.300 H17" fill="none" stroke="#666" stroke-width="1"/><path d="M11.500 7.500 H15.500 M11.500 9.800 H15.500 M11.500 12.100 H15.500" stroke="#3b6fd0" stroke-width="1"/><rect x="0.300" y="5" width="10.200" height="10" rx="0.800" fill="#2f5fc4"/><text x="5.400" y="13" text-anchor="middle" font-family="Liberation Sans, sans-serif" font-size="8.400" font-weight="700" fill="#fff">W</text></svg>
<div style="left:524.3px;top:567.47px;width:11.5px;height:11.5px;border:1.700px solid #727272;border-radius:1.800px;background:#fff"></div>
<svg style="left:1016.5px;top:568.47px" width="12.5" height="8.8" viewBox="0 0 12.500 8.800" ><rect x="0.500" y="0.500" width="11.500" height="7.800" fill="#fff" stroke="#777" stroke-width="0.900"/><path d="M0.500 0.500 L6.250 5 L12 0.500 M0.500 8.300 L4.600 3.800 M12 8.300 L7.900 3.800" fill="none" stroke="#777" stroke-width="0.800"/></svg>
<div style="left:1085px;top:567.47px;width:11.5px;height:11.5px;border:1.700px solid #727272;border-radius:1.800px;background:#fff"></div>
<svg style="left:1159.8px;top:564.67px" width="17.2" height="17.2" viewBox="0 0 24 24" ><path fill="#555" d="M14.590 8L12 10.590 9.410 8 8 9.410 10.590 12 8 14.590 9.410 16 12 13.410 14.590 16 16 14.590 13.410 12 16 9.410 14.590 8zM12 2C6.470 2 2 6.470 2 12s4.470 10 10 10 10-4.470 10-10S17.530 2 12 2zm0 18c-4.410 0-8-3.590-8-8s3.590-8 8-8 8 3.590 8 8-3.590 8-8 8z"/></svg>
<div style="left:67px;top:583.78px;width:413px;height:23.41px;background:#f5f5f5"></div>
<div style="left:982.5px;top:583.78px;width:79.5px;height:23.41px;background:#f5f5f5"></div>
<div style="left:1118.7px;top:583.78px;width:98.8px;height:23.41px;background:#f5f5f5"></div>
<div style="left:45px;top:583.78px;width:2.3px;height:23.41px;background:#697ee1"></div>
<div style="left:26.9px;top:590.68px;width:11px;height:11px;border:1.300px solid #e2e2e2;border-radius:2px;background:#fdfdfd"></div>
<svg style="left:141.6px;top:586.38px" width="22" height="20" viewBox="0 0 22 20" ><rect x="1.650" y="1.350" width="18.200" height="13.600" rx="0.900" fill="none" stroke="#f0875a" stroke-width="1.700"/><path d="M10.750 14.600 L14.700 19.500 H6.800 Z" fill="#f0875a"/></svg>
<div style="left:524.3px;top:590.88px;width:11.5px;height:11.5px;border:1.700px solid #727272;border-radius:1.800px;background:#fff"></div>
<svg style="left:1016.5px;top:591.88px" width="12.5" height="8.8" viewBox="0 0 12.500 8.800" ><rect x="0.500" y="0.500" width="11.500" height="7.800" fill="#fff" stroke="#777" stroke-width="0.900"/><path d="M0.500 0.500 L6.250 5 L12 0.500 M0.500 8.300 L4.600 3.800 M12 8.300 L7.900 3.800" fill="none" stroke="#777" stroke-width="0.800"/></svg>
<div style="left:1085px;top:590.88px;width:11.5px;height:11.5px;border:1.700px solid #727272;border-radius:1.800px;background:#fff"></div>
<svg style="left:1159.8px;top:588.0799999999999px" width="17.2" height="17.2" viewBox="0 0 24 24" ><path fill="#555" d="M14.590 8L12 10.590 9.410 8 8 9.410 10.590 12 8 14.590 9.410 16 12 13.410 14.590 16 16 14.590 13.410 12 16 9.410 14.590 8zM12 2C6.470 2 2 6.470 2 12s4.470 10 10 10 10-4.470 10-10S17.530 2 12 2zm0 18c-4.410 0-8-3.590-8-8s3.590-8 8-8 8 3.590 8 8-3.590 8-8 8z"/></svg>
<div style="left:67px;top:607.19px;width:413px;height:23.41px;background:#f5f5f5"></div>
<div style="left:982.5px;top:607.19px;width:79.5px;height:23.41px;background:#f5f5f5"></div>
<div style="left:1118.7px;top:607.19px;width:98.8px;height:23.41px;background:#f5f5f5"></div>
<div style="left:45px;top:607.19px;width:2.3px;height:23.41px;background:#697ee1"></div>
<div style="left:26.9px;top:614.09px;width:11px;height:11px;border:1.300px solid #e2e2e2;border-radius:2px;background:#fdfdfd"></div>
<svg style="left:141.6px;top:609.7900000000001px" width="22" height="20" viewBox="0 0 22 20" ><rect x="1.650" y="1.350" width="18.200" height="13.600" rx="0.900" fill="none" stroke="#f0875a" stroke-width="1.700"/><path d="M10.750 14.600 L14.700 19.500 H6.800 Z" fill="#f0875a"/></svg>
<div style="left:524.3px;top:614.2900000000001px;width:11.5px;height:11.5px;border:1.700px solid #727272;border-radius:1.800px;background:#fff"></div>
<svg style="left:1016.5px;top:615.2900000000001px" width="12.5" height="8.8" viewBox="0 0 12.500 8.800" ><rect x="0.500" y="0.500" width="11.500" height="7.800" fill="#fff" stroke="#777" stroke-width="0.900"/><path d="M0.500 0.500 L6.250 5 L12 0.500 M0.500 8.300 L4.600 3.800 M12 8.300 L7.900 3.800" fill="none" stroke="#777" stroke-width="0.800"/></svg>
<div style="left:1085px;top:614.2900000000001px;width:11.5px;height:11.5px;border:1.700px solid #727272;border-radius:1.800px;background:#fff"></div>
<svg style="left:1159.8px;top:611.49px" width="17.2" height="17.2" viewBox="0 0 24 24" ><path fill="#555" d="M14.590 8L12 10.590 9.410 8 8 9.410 10.590 12 8 14.590 9.410 16 12 13.410 14.590 16 16 14.590 13.410 12 16 9.410 14.590 8zM12 2C6.470 2 2 6.470 2 12s4.470 10 10 10 10-4.470 10-10S17.530 2 12 2zm0 18c-4.410 0-8-3.590-8-8s3.590-8 8-8 8 3.590 8 8-3.590 8-8 8z"/></svg>
<div style="left:67px;top:630.6px;width:413px;height:23.41px;background:#f5f5f5"></div>
<div style="left:982.5px;top:630.6px;width:79.5px;height:23.41px;background:#f5f5f5"></div>
<div style="left:1118.7px;top:630.6px;width:98.8px;height:23.41px;background:#f5f5f5"></div>
<div style="left:45px;top:630.6px;width:2.3px;height:23.41px;background:#697ee1"></div>
<div style="left:26.9px;top:637.5px;width:11px;height:11px;border:1.300px solid #e2e2e2;border-radius:2px;background:#fdfdfd"></div>
<svg style="left:144.2px;top:634.9px" width="16.6" height="16" viewBox="0 0 16.600 16" ><rect x="0" y="0" width="16.600" height="16" rx="1.800" fill="#b3b6bd"/><path d="M3.300 5.900 H13.300 M3.300 11.400 H10.800" stroke="#fff" stroke-width="2.300"/></svg>
<div style="left:524.3px;top:637.7px;width:11.5px;height:11.5px;border:1.700px solid #727272;border-radius:1.800px;background:#fff"></div>
<svg style="left:1016.5px;top:638.7px" width="12.5" height="8.8" viewBox="0 0 12.500 8.800" ><rect x="0.500" y="0.500" width="11.500" height="7.800" fill="#fff" stroke="#777" stroke-width="0.900"/><path d="M0.500 0.500 L6.250 5 L12 0.500 M0.500 8.300 L4.600 3.800 M12 8.300 L7.900 3.800" fill="none" stroke="#777" stroke-width="0.800"/></svg>
<div style="left:1085px;top:637.7px;width:11.5px;height:11.5px;border:1.700px solid #727272;border-radius:1.800px;background:#fff"></div>
<svg style="left:1159.8px;top:634.9px" width="17.2" height="17.2" viewBox="0 0 24 24" ><path fill="#555" d="M14.590 8L12 10.590 9.410 8 8 9.410 10.590 12 8 14.590 9.410 16 12 13.410 14.590 16 16 14.590 13.410 12 16 9.410 14.590 8zM12 2C6.470 2 2 6.470 2 12s4.470 10 10 10 10-4.470 10-10S17.530 2 12 2zm0 18c-4.410 0-8-3.590-8-8s3.590-8 8-8 8 3.590 8 8-3.590 8-8 8z"/></svg>
<div style="left:19.5px;top:443.32000000000005px;width:1198px;height:1px;background:#e3e3e3"></div>
<div style="left:45px;top:443.32000000000005px;width:2.3px;height:1px;background:#697ee1"></div>
<div style="left:19.5px;top:466.73px;width:1198px;height:1px;background:#e3e3e3"></div>
<div style="left:45px;top:466.73px;width:2.3px;height:1px;background:#697ee1"></div>
<div style="left:19.5px;top:490.14000000000004px;width:1198px;height:1px;background:#e3e3e3"></div>
<div style="left:45px;top:490.14000000000004px;width:2.3px;height:1px;background:#697ee1"></div>
<div style="left:19.5px;top:513.55px;width:1198px;height:1px;background:#e3e3e3"></div>
<div style="left:45px;top:513.55px;width:2.3px;height:1px;background:#697ee1"></div>
<div style="left:19.5px;top:560.37px;width:1198px;height:1px;background:#e3e3e3"></div>
<div style="left:45px;top:560.37px;width:2.3px;height:1px;background:#697ee1"></div>
<div style="left:19.5px;top:583.78px;width:1198px;height:1px;background:#e3e3e3"></div>
<div style="left:45px;top:583.78px;width:2.3px;height:1px;background:#697ee1"></div>
<div style="left:19.5px;top:607.1899999999999px;width:1198px;height:1px;background:#e3e3e3"></div>
<div style="left:45px;top:607.1899999999999px;width:2.3px;height:1px;background:#697ee1"></div>
<div style="left:19.5px;top:630.6px;width:1198px;height:1px;background:#e3e3e3"></div>
<div style="left:45px;top:630.6px;width:2.3px;height:1px;background:#697ee1"></div>
<div style="left:19.5px;top:654.01px;width:1198px;height:1px;background:#e3e3e3"></div>
<div style="left:45px;top:654.01px;width:2.3px;height:1px;background:#697ee1"></div>
<svg style="left:45px;top:506.54999999999995px" width="8" height="7" viewBox="0 0 8 7" ><path d="M0 0 L7.500 7 H0 Z" fill="#697ee1"/></svg>
<svg style="left:45px;top:647.01px" width="8" height="7" viewBox="0 0 8 7" ><path d="M0 0 L7.500 7 H0 Z" fill="#697ee1"/></svg>
<span class="t" id="t0" style="top:15.01px;font-size:10.97px;color:#555;line-height:12.605px;letter-spacing:-0.514px;left:191px;">PROJECTS</span>
<span class="t" id="t1" style="top:15.01px;font-size:10.97px;color:#555;line-height:12.605px;letter-spacing:-0.418px;left:279.5px;">R&amp;D-001</span>
<span class="t" id="t2" style="top:15.01px;font-size:10.97px;color:#d8347a;line-height:12.605px;letter-spacing:-0.003px;left:457.5px;">Stage &amp; gate</span>
<span class="t" id="t3" style="top:15.01px;font-size:10.97px;color:#555;line-height:12.605px;letter-spacing:0.114px;left:546px;">Gantt</span>
<span class="t" id="t4" style="top:15.01px;font-size:10.97px;color:#555;line-height:12.605px;letter-spacing:0.022px;left:599px;">Boards</span>
<span class="t" id="t5" style="top:15.01px;font-size:10.97px;color:#555;line-height:12.605px;letter-spacing:0.025px;left:659.5px;">Dashboard</span>
<span class="t" id="t6" style="top:15.01px;font-size:10.97px;color:#555;line-height:12.605px;letter-spacing:-0.294px;left:738px;">OKR</span>
<span class="t" id="t7" style="top:15.00px;font-size:9.94px;color:#333;line-height:11.421px;letter-spacing:-0.020px;left:1072.8px;">Filter...</span>
<span class="t" id="t8" style="top:57.01px;font-size:10.12px;color:#555;line-height:11.628px;letter-spacing:-0.085px;left:59.4px;">Update</span>
<span class="t" id="t9" style="top:86.01px;font-size:10.09px;color:#fff;line-height:11.593px;letter-spacing:-0.082px;left:47px;">Gate deliverables *</span>
<span class="t" id="t10" style="top:86.01px;font-size:10.09px;color:#555;line-height:11.593px;letter-spacing:0.002px;left:258px;transform:translateX(-50%);">Gates</span>
<span class="t" id="t11" style="top:86.01px;font-size:10.09px;color:#555;line-height:11.593px;letter-spacing:0.090px;left:410px;transform:translateX(-50%);">History (log)</span>
<span class="t" id="t12" style="top:148.01px;font-size:10.12px;color:#fff;line-height:11.628px;letter-spacing:-0.001px;left:103.0px;transform:translateX(-50%);">Proposal</span>
<span class="t" id="t13" style="top:148.01px;font-size:10.12px;color:#fff;line-height:11.628px;letter-spacing:-0.110px;left:262.75px;transform:translateX(-50%);">Discovery</span>
<span class="t" id="t14" style="top:148.01px;font-size:10.12px;color:#fff;line-height:11.628px;letter-spacing:-0.118px;left:421.5px;transform:translateX(-50%);">Business Case</span>
<span class="t" id="t15" style="top:148.01px;font-size:10.12px;color:#fff;line-height:11.628px;letter-spacing:-0.016px;left:580.75px;transform:translateX(-50%);">Development</span>
<span class="t" id="t16" style="top:148.01px;font-size:10.12px;color:#fff;line-height:11.628px;letter-spacing:0.056px;left:740.25px;transform:translateX(-50%);">Testing and Validation</span>
<span class="t" id="t17" style="top:148.01px;font-size:10.12px;color:#fff;line-height:11.628px;letter-spacing:-0.129px;left:898.75px;transform:translateX(-50%);">Launch</span>
<span class="t" id="t18" style="top:205.01px;font-size:10.12px;color:#555;line-height:11.628px;letter-spacing:-0.114px;left:187.8px;">Go to Discovery 2</span>
<span class="t" id="t19" style="top:223.01px;font-size:10.12px;color:#555;line-height:11.628px;letter-spacing:0.154px;left:187.8px;">16/AUG/24</span>
<span class="t" id="t20" style="top:205.01px;font-size:10.12px;color:#555;line-height:11.628px;letter-spacing:-0.135px;left:346.8px;">Go to Build Business Case</span>
<span class="t" id="t21" style="top:223.01px;font-size:10.12px;color:#555;line-height:11.628px;letter-spacing:0.194px;left:346.8px;">11/APR/25</span>
<span class="t" id="t22" style="top:205.01px;font-size:10.12px;color:#555;line-height:11.628px;letter-spacing:-0.101px;left:505.8px;">Go to Development</span>
<span class="t" id="t23" style="top:223.01px;font-size:10.12px;color:#555;line-height:11.628px;letter-spacing:0.105px;left:505.8px;">09/OCT/25</span>
<span class="t" id="t24" style="top:205.01px;font-size:10.12px;color:#555;line-height:11.628px;letter-spacing:-0.005px;left:664.8px;">Go to Testing and Validation</span>
<span class="t" id="t25" style="top:223.01px;font-size:10.12px;color:#555;line-height:11.628px;letter-spacing:0.258px;left:664.8px;">05/MAR/26</span>
<span class="t" id="t26" style="top:205.01px;font-size:10.12px;color:#555;line-height:11.628px;letter-spacing:-0.109px;left:823.8px;">Go to Launch</span>
<span class="t" id="t27" style="top:223.01px;font-size:10.12px;color:#555;line-height:11.628px;letter-spacing:0.098px;left:823.8px;">05/AUG/26</span>
<span class="t" id="t28" style="top:205.01px;font-size:10.12px;color:#555;line-height:11.628px;letter-spacing:-0.056px;left:982.8px;">Project Close</span>
<span class="t" id="t29" style="top:223.01px;font-size:10.12px;color:#555;line-height:11.628px;letter-spacing:0.117px;left:982.8px;">16/SEP/26</span>
<span class="t" id="t30" style="top:244.02px;font-size:10.12px;color:#555;line-height:11.628px;letter-spacing:-0.026px;left:81.5px;">Gate submission</span>
<span class="t" id="t31" style="top:284.01px;font-size:10.19px;color:#d8347a;line-height:11.708px;letter-spacing:0.006px;left:42.5px;">DELIVERABLES</span>
<span class="t" id="t32" style="top:284.01px;font-size:10.19px;color:#555;line-height:11.708px;letter-spacing:0.205px;left:167.6px;">GATE INFORMATION</span>
<span class="t" id="t33" style="top:284.01px;font-size:10.19px;color:#555;line-height:11.708px;letter-spacing:-0.122px;left:316.6px;">SCORECARD</span>
<span class="t" id="t34" style="top:305.00px;font-size:13.12px;color:#555;line-height:15.075px;letter-spacing:-0.003px;left:17.3px;">Deliverable(s) for: Go to Build Business Case</span>
<span class="t" id="t35" style="top:339.01px;font-size:9.96px;color:#777;line-height:11.444px;letter-spacing:0.058px;left:21.1px;">Enter a document description</span>
<span class="t" id="t36" style="top:340.00px;font-size:9.96px;color:#555;line-height:11.444px;letter-spacing:-0.062px;left:442.4px;transform:translateX(-50%);">Create</span>
<span class="t" id="t37" style="top:374.02px;font-size:10.12px;color:#555;line-height:11.628px;letter-spacing:0.002px;left:95px;transform:translateX(-50%);">.</span>
<span class="t" id="t38" style="top:374.02px;font-size:10.12px;color:#4e535e;line-height:11.628px;letter-spacing:0.135px;left:152px;transform:translateX(-50%);">Actions</span>
<span class="t" id="t39" style="top:374.02px;font-size:10.12px;color:#4e535e;line-height:11.628px;letter-spacing:-0.021px;left:284.8px;transform:translateX(-50%);">Document name</span>
<span class="t" id="t40" style="top:374.02px;font-size:10.12px;color:#4e535e;line-height:11.628px;letter-spacing:0.005px;left:434.4px;transform:translateX(-50%);">Status</span>
<span class="t" id="t41" style="top:374.02px;font-size:10.12px;color:#4e535e;line-height:11.628px;letter-spacing:0.075px;left:529.8px;transform:translateX(-50%);">Validate</span>
<span class="t" id="t42" style="top:374.02px;font-size:10.12px;color:#4e535e;line-height:11.628px;letter-spacing:0.002px;left:636.5px;transform:translateX(-50%);">Role</span>
<span class="t" id="t43" style="top:365.02px;font-size:10.12px;color:#4e535e;line-height:11.628px;letter-spacing:-0.015px;left:838px;transform:translateX(-50%);">Completion date</span>
<span class="t" id="t44" style="top:383.02px;font-size:10.12px;color:#4e535e;line-height:11.628px;letter-spacing:0.048px;left:765.5px;transform:translateX(-50%);">Target</span>
<span class="t" id="t45" style="top:383.02px;font-size:10.12px;color:#4e535e;line-height:11.628px;letter-spacing:0.182px;left:910.4px;transform:translateX(-50%);">Actual</span>
<span class="t" id="t46" style="top:368.01px;font-size:10.12px;color:#4e535e;line-height:11.628px;letter-spacing:-0.274px;left:1022.3px;transform:translateX(-50%);">Send a</span>
<span class="t" id="t47" style="top:378.01px;font-size:10.12px;color:#4e535e;line-height:11.628px;letter-spacing:0.001px;left:1022.5px;transform:translateX(-50%);">reminder</span>
<span class="t" id="t48" style="top:374.02px;font-size:10.12px;color:#4e535e;line-height:11.628px;letter-spacing:-0.043px;left:1067px;">Mandatory.</span>
<span class="t" id="t49" style="top:374.02px;font-size:10.12px;color:#4e535e;line-height:11.628px;letter-spacing:0.100px;left:1168.4px;transform:translateX(-50%);">Validate</span>
<span class="t" id="t50" style="top:403.01px;font-size:10.04px;color:#5c5c5c;line-height:11.536px;font-weight:700;letter-spacing:-0.032px;left:74.3px;">Assigned</span>
<span class="t" id="t51" style="top:427.01px;font-size:10.12px;color:#222;line-height:11.628px;letter-spacing:-0.049px;left:184.7px;">Product Scorecard</span>
<span class="t" id="t52" style="top:427.01px;font-size:10.12px;color:#222;line-height:11.628px;letter-spacing:-0.024px;left:394px;">Assigned</span>
<span class="t" id="t53" style="top:427.01px;font-size:10.12px;color:#222;line-height:11.628px;letter-spacing:0.003px;left:585px;">Project Mngr.</span>
<span class="t" id="t54" style="top:427.01px;font-size:10.12px;color:#222;line-height:11.628px;letter-spacing:0.172px;right:446.20000000000005px;">11/APR/25</span>
<span class="t" id="t55" style="top:450.01px;font-size:10.12px;color:#222;line-height:11.628px;letter-spacing:0.099px;left:184.7px;">Market Assessment</span>
<span class="t" id="t56" style="top:450.01px;font-size:10.12px;color:#222;line-height:11.628px;letter-spacing:-0.024px;left:394px;">Assigned</span>
<span class="t" id="t57" style="top:450.01px;font-size:10.12px;color:#222;line-height:11.628px;letter-spacing:-0.003px;left:585px;">Product Mngr.</span>
<span class="t" id="t58" style="top:450.01px;font-size:10.12px;color:#222;line-height:11.628px;letter-spacing:0.172px;right:446.20000000000005px;">11/APR/25</span>
<span class="t" id="t59" style="top:474.00px;font-size:10.12px;color:#222;line-height:11.628px;letter-spacing:-0.062px;left:184.7px;">Manufacturing and Supply Chain Assessme...</span>
<span class="t" id="t60" style="top:474.00px;font-size:10.12px;color:#222;line-height:11.628px;letter-spacing:-0.024px;left:394px;">Assigned</span>
<span class="t" id="t61" style="top:474.00px;font-size:10.12px;color:#222;line-height:11.628px;letter-spacing:0.045px;left:585px;">Operations</span>
<span class="t" id="t62" style="top:474.00px;font-size:10.12px;color:#222;line-height:11.628px;letter-spacing:0.172px;right:446.20000000000005px;">11/APR/25</span>
<span class="t" id="t63" style="top:497.01px;font-size:10.12px;color:#222;line-height:11.628px;letter-spacing:0.009px;left:184.7px;">Integrated Product Definition</span>
<span class="t" id="t64" style="top:497.01px;font-size:10.12px;color:#222;line-height:11.628px;letter-spacing:-0.024px;left:394px;">Assigned</span>
<span class="t" id="t65" style="top:497.01px;font-size:10.12px;color:#222;line-height:11.628px;letter-spacing:-0.003px;left:585px;">Product Mngr.</span>
<span class="t" id="t66" style="top:497.01px;font-size:10.12px;color:#222;line-height:11.628px;letter-spacing:0.172px;right:446.20000000000005px;">11/APR/25</span>
<span class="t" id="t67" style="top:520.01px;font-size:10.04px;color:#5c5c5c;line-height:11.536px;font-weight:700;letter-spacing:0.035px;left:74.3px;">Not assigned</span>
<span class="t" id="t68" style="top:544.01px;font-size:10.12px;color:#222;line-height:11.628px;letter-spacing:0.097px;left:184.7px;">Technical Assessment</span>
<span class="t" id="t69" style="top:544.01px;font-size:10.12px;color:#222;line-height:11.628px;letter-spacing:-0.486px;left:585px;">R&amp;D</span>
<span class="t" id="t70" style="top:544.01px;font-size:10.12px;color:#222;line-height:11.628px;letter-spacing:0.172px;right:446.20000000000005px;">11/APR/25</span>
<span class="t" id="t71" style="top:567.00px;font-size:10.12px;color:#222;line-height:11.628px;letter-spacing:0.039px;left:184.7px;">Intellectual Property Assessment</span>
<span class="t" id="t72" style="top:567.00px;font-size:10.12px;color:#222;line-height:11.628px;letter-spacing:-0.486px;left:585px;">R&amp;D</span>
<span class="t" id="t73" style="top:567.00px;font-size:10.12px;color:#222;line-height:11.628px;letter-spacing:0.172px;right:446.20000000000005px;">11/APR/25</span>
<span class="t" id="t74" style="top:591.01px;font-size:10.12px;color:#222;line-height:11.628px;letter-spacing:-0.013px;left:184.7px;">Initial Risk Roster</span>
<span class="t" id="t75" style="top:591.01px;font-size:10.12px;color:#222;line-height:11.628px;letter-spacing:0.003px;left:585px;">Project Mngr.</span>
<span class="t" id="t76" style="top:591.01px;font-size:10.12px;color:#222;line-height:11.628px;letter-spacing:0.172px;right:446.20000000000005px;">11/APR/25</span>
<span class="t" id="t77" style="top:614.01px;font-size:10.12px;color:#222;line-height:11.628px;letter-spacing:0.049px;left:184.7px;">Initial PnL Analysis</span>
<span class="t" id="t78" style="top:614.01px;font-size:10.12px;color:#222;line-height:11.628px;letter-spacing:-0.079px;left:585px;">Sales</span>
<span class="t" id="t79" style="top:614.01px;font-size:10.12px;color:#222;line-height:11.628px;letter-spacing:0.172px;right:446.20000000000005px;">11/APR/25</span>
<span class="t" id="t80" style="top:637.01px;font-size:10.12px;color:#222;line-height:11.628px;letter-spacing:-0.101px;left:184.7px;">Executive Gate Presentation</span>
<span class="t" id="t81" style="top:637.01px;font-size:10.12px;color:#222;line-height:11.628px;letter-spacing:0.003px;left:585px;">Project Mngr.</span>
<span class="t" id="t82" style="top:637.01px;font-size:10.12px;color:#222;line-height:11.628px;letter-spacing:0.172px;right:446.20000000000005px;">11/APR/25</span>
</div></body></html>
